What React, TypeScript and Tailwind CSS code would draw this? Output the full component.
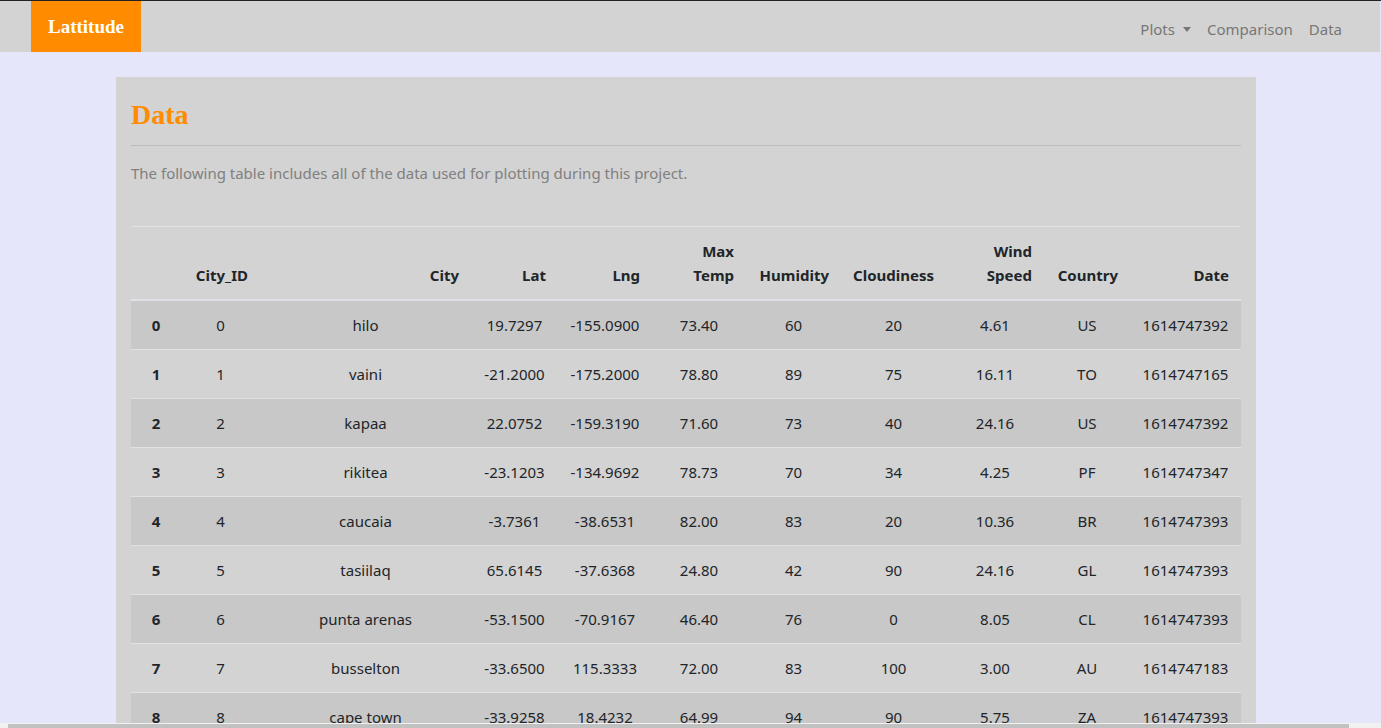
import React from "react";

const rows: (string | number)[][] = [
  [0, 0, "hilo", "19.7297", "-155.0900", "73.40", 60, 20, "4.61", "US", 1614747392],
  [1, 1, "vaini", "-21.2000", "-175.2000", "78.80", 89, 75, "16.11", "TO", 1614747165],
  [2, 2, "kapaa", "22.0752", "-159.3190", "71.60", 73, 40, "24.16", "US", 1614747392],
  [3, 3, "rikitea", "-23.1203", "-134.9692", "78.73", 70, 34, "4.25", "PF", 1614747347],
  [4, 4, "caucaia", "-3.7361", "-38.6531", "82.00", 83, 20, "10.36", "BR", 1614747393],
  [5, 5, "tasiilaq", "65.6145", "-37.6368", "24.80", 42, 90, "24.16", "GL", 1614747393],
  [6, 6, "punta arenas", "-53.1500", "-70.9167", "46.40", 76, 0, "8.05", "CL", 1614747393],
  [7, 7, "busselton", "-33.6500", "115.3333", "72.00", 83, 100, "3.00", "AU", 1614747183],
  [8, 8, "cape town", "-33.9258", "18.4232", "64.99", 94, 90, "5.75", "ZA", 1614747393],
];

const widths = [50, 79, 211, 87, 94, 94, 95, 105, 98, 86, 111];

export default function App() {
  return (
    <div
      className="min-h-screen bg-[#e6e6fa] border-t border-[#222222] text-[#212529]"
      style={{ fontFamily: '"Noto Sans", "Open Sans", sans-serif' }}
    >
      <nav className="h-[51px] bg-[#d3d3d3] flex items-stretch pl-[31px] pr-[38px] mr-px">
        <div className="w-[110px] bg-[#ff8c00] flex items-center justify-center pt-[1px]">
          <span
            className="text-white font-bold text-[19px]"
            style={{ fontFamily: '"Liberation Serif", serif' }}
          >
            Lattitude
          </span>
        </div>
        <div className="flex-1" />
        <div className="flex items-center gap-[16px] text-[15px] text-[#777777] pt-[6px]">
          <span className="flex items-center gap-[8px]">
            Plots
            <span className="inline-block w-0 h-0 border-l-[4.5px] border-r-[4.5px] border-t-[5px] border-l-transparent border-r-transparent border-t-[#777777]" />
          </span>
          <span>Comparison</span>
          <span>Data</span>
        </div>
      </nav>

      <div className="w-[1140px] ml-[116px] mt-[25px] bg-[#d3d3d3] px-[15px] pt-[21px] pb-[20px]">
        <h2
          className="text-[28px] font-bold text-[#ff8c00] leading-[1.2]"
          style={{ fontFamily: '"Liberation Serif", serif' }}
        >
          Data
        </h2>
        <hr className="mt-[13px] border-0 border-t border-[#bdbdbd]" />
        <p className="mt-[15px] text-[15px] leading-[24px] text-[#808080]">
          The following table includes all of the data used for plotting during this project.
        </p>
        <table className="mt-[41px] w-[1110px] table-fixed border-collapse text-[15px] leading-[24px]">
          <colgroup>
            {widths.map((w, i) => (
              <col key={i} style={{ width: w }} />
            ))}
          </colgroup>
          <thead>
            <tr className="text-right align-bottom">
              <th className="px-[12px] py-[12px] border-t border-b-2 border-[#dee2e6]"></th>
              <th className="px-[12px] py-[12px] border-t border-b-2 border-[#dee2e6] whitespace-nowrap">City_ID</th>
              <th className="px-[12px] py-[12px] border-t border-b-2 border-[#dee2e6] whitespace-nowrap">City</th>
              <th className="px-[12px] py-[12px] border-t border-b-2 border-[#dee2e6] whitespace-nowrap">Lat</th>
              <th className="px-[12px] py-[12px] border-t border-b-2 border-[#dee2e6] whitespace-nowrap">Lng</th>
              <th className="px-[12px] py-[12px] border-t border-b-2 border-[#dee2e6] whitespace-nowrap">
                Max
                <br />
                Temp
              </th>
              <th className="px-[12px] py-[12px] border-t border-b-2 border-[#dee2e6] whitespace-nowrap">Humidity</th>
              <th className="px-[12px] py-[12px] border-t border-b-2 border-[#dee2e6] whitespace-nowrap">Cloudiness</th>
              <th className="px-[12px] py-[12px] border-t border-b-2 border-[#dee2e6] whitespace-nowrap">
                Wind
                <br />
                Speed
              </th>
              <th className="px-[12px] py-[12px] border-t border-b-2 border-[#dee2e6] whitespace-nowrap">Country</th>
              <th className="px-[12px] py-[12px] border-t border-b-2 border-[#dee2e6] whitespace-nowrap">Date</th>
            </tr>
          </thead>
          <tbody>
            {rows.map((r, ri) => (
              <tr key={ri} className={ri % 2 === 0 ? "bg-[#c8c8c8]" : ""}>
                {r.map((c, ci) =>
                  ci === 0 ? (
                    <th key={ci} className="px-[12px] py-[12px] border-t border-[#dee2e6] text-center font-bold whitespace-nowrap">
                      {c}
                    </th>
                  ) : (
                    <td key={ci} className="px-[12px] py-[12px] border-t border-[#dee2e6] text-center whitespace-nowrap">
                      {c}
                    </td>
                  )
                )}
              </tr>
            ))}
          </tbody>
        </table>
      </div>

      <div className="fixed bottom-0 left-0 right-0 h-[5px] bg-[#f1f1f1]">
        <div className="absolute left-[8px] top-[1px] bottom-0 w-[1341px] bg-[#c1c1c1]" />
      </div>
    </div>
  );
}
